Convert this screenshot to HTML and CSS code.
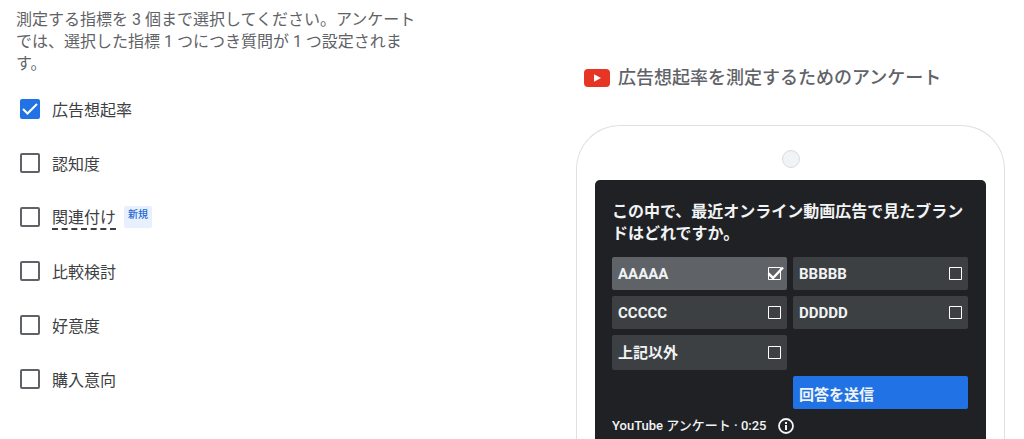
FILE: index.html
```html
<!DOCTYPE html>
<html lang="ja">
  <head>
    <meta charset="UTF-8" />
    <meta name="viewport" content="width=device-width, initial-scale=1.0" />
    <title>ブランド効果測定</title>
    <link rel="stylesheet" href="styles.css">
  </head>
  <body>
    <main class="page">
      <section class="metrics">
        <p class="intro">測定する指標を 3 個まで選択してください。アンケートでは、選択した指標 1 つにつき質問が 1 つ設定されます。</p>
        <ul class="metric-list">
          <li>
            <input type="checkbox" id="recall" checked />
            <label for="recall">広告想起率</label>
          </li>
          <li>
            <input type="checkbox" id="awareness" />
            <label for="awareness">認知度</label>
          </li>
          <li>
            <input type="checkbox" id="association" />
            <label for="association" class="hint">関連付け</label>
            <span class="tag">新規</span>
          </li>
          <li>
            <input type="checkbox" id="consideration" />
            <label for="consideration">比較検討</label>
          </li>
          <li>
            <input type="checkbox" id="favorability" />
            <label for="favorability">好意度</label>
          </li>
          <li>
            <input type="checkbox" id="intent" />
            <label for="intent">購入意向</label>
          </li>
        </ul>
      </section>

      <section class="preview">
        <h2>
          <svg width="26" height="18" viewBox="0 0 26 18" aria-hidden="true">
            <rect width="26" height="18" rx="4" fill="#e73525" />
            <path d="M10 5.2v7.6l7-3.8z" fill="#fff" />
          </svg>
          広告想起率を測定するためのアンケート
        </h2>
        <div class="phone">
          <div class="camera"></div>
          <form class="screen">
            <p class="question">この中で、最近オンライン動画広告で見たブランドはどれですか。</p>
            <div class="options">
              <label class="option selected">AAAAA<input type="checkbox" checked /></label>
              <label class="option">BBBBB<input type="checkbox" /></label>
              <label class="option">CCCCC<input type="checkbox" /></label>
              <label class="option">DDDDD<input type="checkbox" /></label>
              <label class="option">上記以外<input type="checkbox" /></label>
              <button type="button" class="submit">回答を送信</button>
            </div>
            <div class="footer">
              YouTube アンケート · 0:25
              <svg width="16" height="16" viewBox="0 0 16 16" aria-hidden="true">
                <circle cx="8" cy="8" r="7" fill="none" stroke="#f1f3f4" stroke-width="1.8" />
                <path d="M7 7h2v5H7zM7 4h2v2H7z" fill="#f1f3f4" />
              </svg>
            </div>
          </form>
        </div>
      </section>
    </main>
  </body>
</html>
```
FILE: styles.css
```css
* {
  box-sizing: border-box;
}
body {
  margin: 0;
  background-color: #fff;
  color: #3c4043;
  font-family: Roboto, "Noto Sans CJK JP", sans-serif;
  font-size: 16px;
  line-height: 22px;
}
.page {
  display: flex;
  justify-content: space-between;
  gap: 24px;
  min-height: 100vh;
  padding: 0 19px 0 16px;
}
.metrics {
  flex: 0 1 404px;
  padding-top: 9px;
}
.intro {
  margin: 0 0 7px;
  color: #5f6368;
}
.metric-list {
  list-style: none;
  margin: 0;
  padding: 0 0 0 4px;
}
.metric-list li {
  display: flex;
  align-items: center;
  height: 54px;
}
.metric-list input {
  appearance: none;
  width: 20px;
  height: 20px;
  margin: 0 12px 0 0;
  border: 2px solid #5f6368;
  border-radius: 2px;
}
.metric-list input:checked {
  border-color: #2173e5;
  background: #2173e5 url("data:image/svg+xml,%3Csvg xmlns='http://www.w3.org/2000/svg' viewBox='0 0 16 16'%3E%3Cpath d='M1 8l4.5 4.5L15 3' fill='none' stroke='white' stroke-width='2'/%3E%3C/svg%3E") center / 16px no-repeat;
}
.metric-list label {
  padding-top: 4px;
}
.metric-list .hint {
  border-bottom: 2px dashed #3c4043;
  line-height: 20px;
}
.tag {
  height: 22px;
  margin-left: 8px;
  padding: 0 4px;
  border-radius: 2px;
  background-color: #e8f0fe;
  color: #1967d2;
  font-size: 10px;
  font-weight: 500;
  line-height: 18px;
}

.preview {
  display: flex;
  flex-direction: column;
  flex: 0 1 429px;
}
.preview h2 {
  display: flex;
  align-items: center;
  gap: 8px;
  margin: 67px 0 36px;
  padding-left: 8px;
  color: #5f6368;
  font-size: 18px;
  font-weight: 500;
}
.phone {
  display: flex;
  flex: 1;
  flex-direction: column;
  padding: 24px 18px 0;
  border: 1px solid #e0e0e0;
  border-bottom: 0;
  border-radius: 44px 44px 0 0;
}
.camera {
  width: 18px;
  height: 18px;
  margin: 0 auto 12px;
  border: 1px solid #dadce0;
  border-radius: 50%;
  background-color: #f1f3f4;
}
.screen {
  flex: 1;
  padding: 21px 18px 0 17px;
  border-radius: 5px 5px 0 0;
  background-color: #202124;
  color: #f1f3f4;
}
.question {
  margin: 0 0 12px;
  font-weight: 700;
}
.options {
  display: grid;
  grid-template-columns: 1fr 1fr;
  grid-template-rows: 33px 33px 35px 33px;
  gap: 6px;
}
.option {
  display: flex;
  align-items: center;
  justify-content: space-between;
  padding: 0 2px 0 6px;
  border-radius: 2px;
  background-color: #3c4043;
  font-size: 15px;
  font-weight: 700;
}
.option.selected {
  background-color: #5f6368;
}
.option input {
  appearance: none;
  width: 20px;
  height: 16px;
  margin: 0;
  background: url("data:image/svg+xml,%3Csvg xmlns='http://www.w3.org/2000/svg' viewBox='0 0 20 16'%3E%3Cpath d='M3.5 1.5h12v12h-12z' fill='none' stroke='white'/%3E%3C/svg%3E") center no-repeat;
}
.option input:checked {
  background-image: url("data:image/svg+xml,%3Csvg xmlns='http://www.w3.org/2000/svg' viewBox='0 0 20 16'%3E%3Cpath d='M3.5 1.5h12v12h-12z' fill='none' stroke='white'/%3E%3Cpath d='M3.5 7.5l4.500 4.500L18 1.500' fill='none' stroke='white' stroke-width='2.5'/%3E%3C/svg%3E");
}
.submit {
  grid-row: 4;
  grid-column: 2;
  padding: 4px 6px 0;
  border: 0;
  border-radius: 2px;
  background-color: #2173e5;
  color: #f1f3f4;
  font: inherit;
  font-size: 15px;
  font-weight: 700;
  text-align: left;
}
.footer {
  display: flex;
  align-items: center;
  gap: 12px;
  margin-top: 6px;
  font-size: 13px;
  font-weight: 500;
}
```
